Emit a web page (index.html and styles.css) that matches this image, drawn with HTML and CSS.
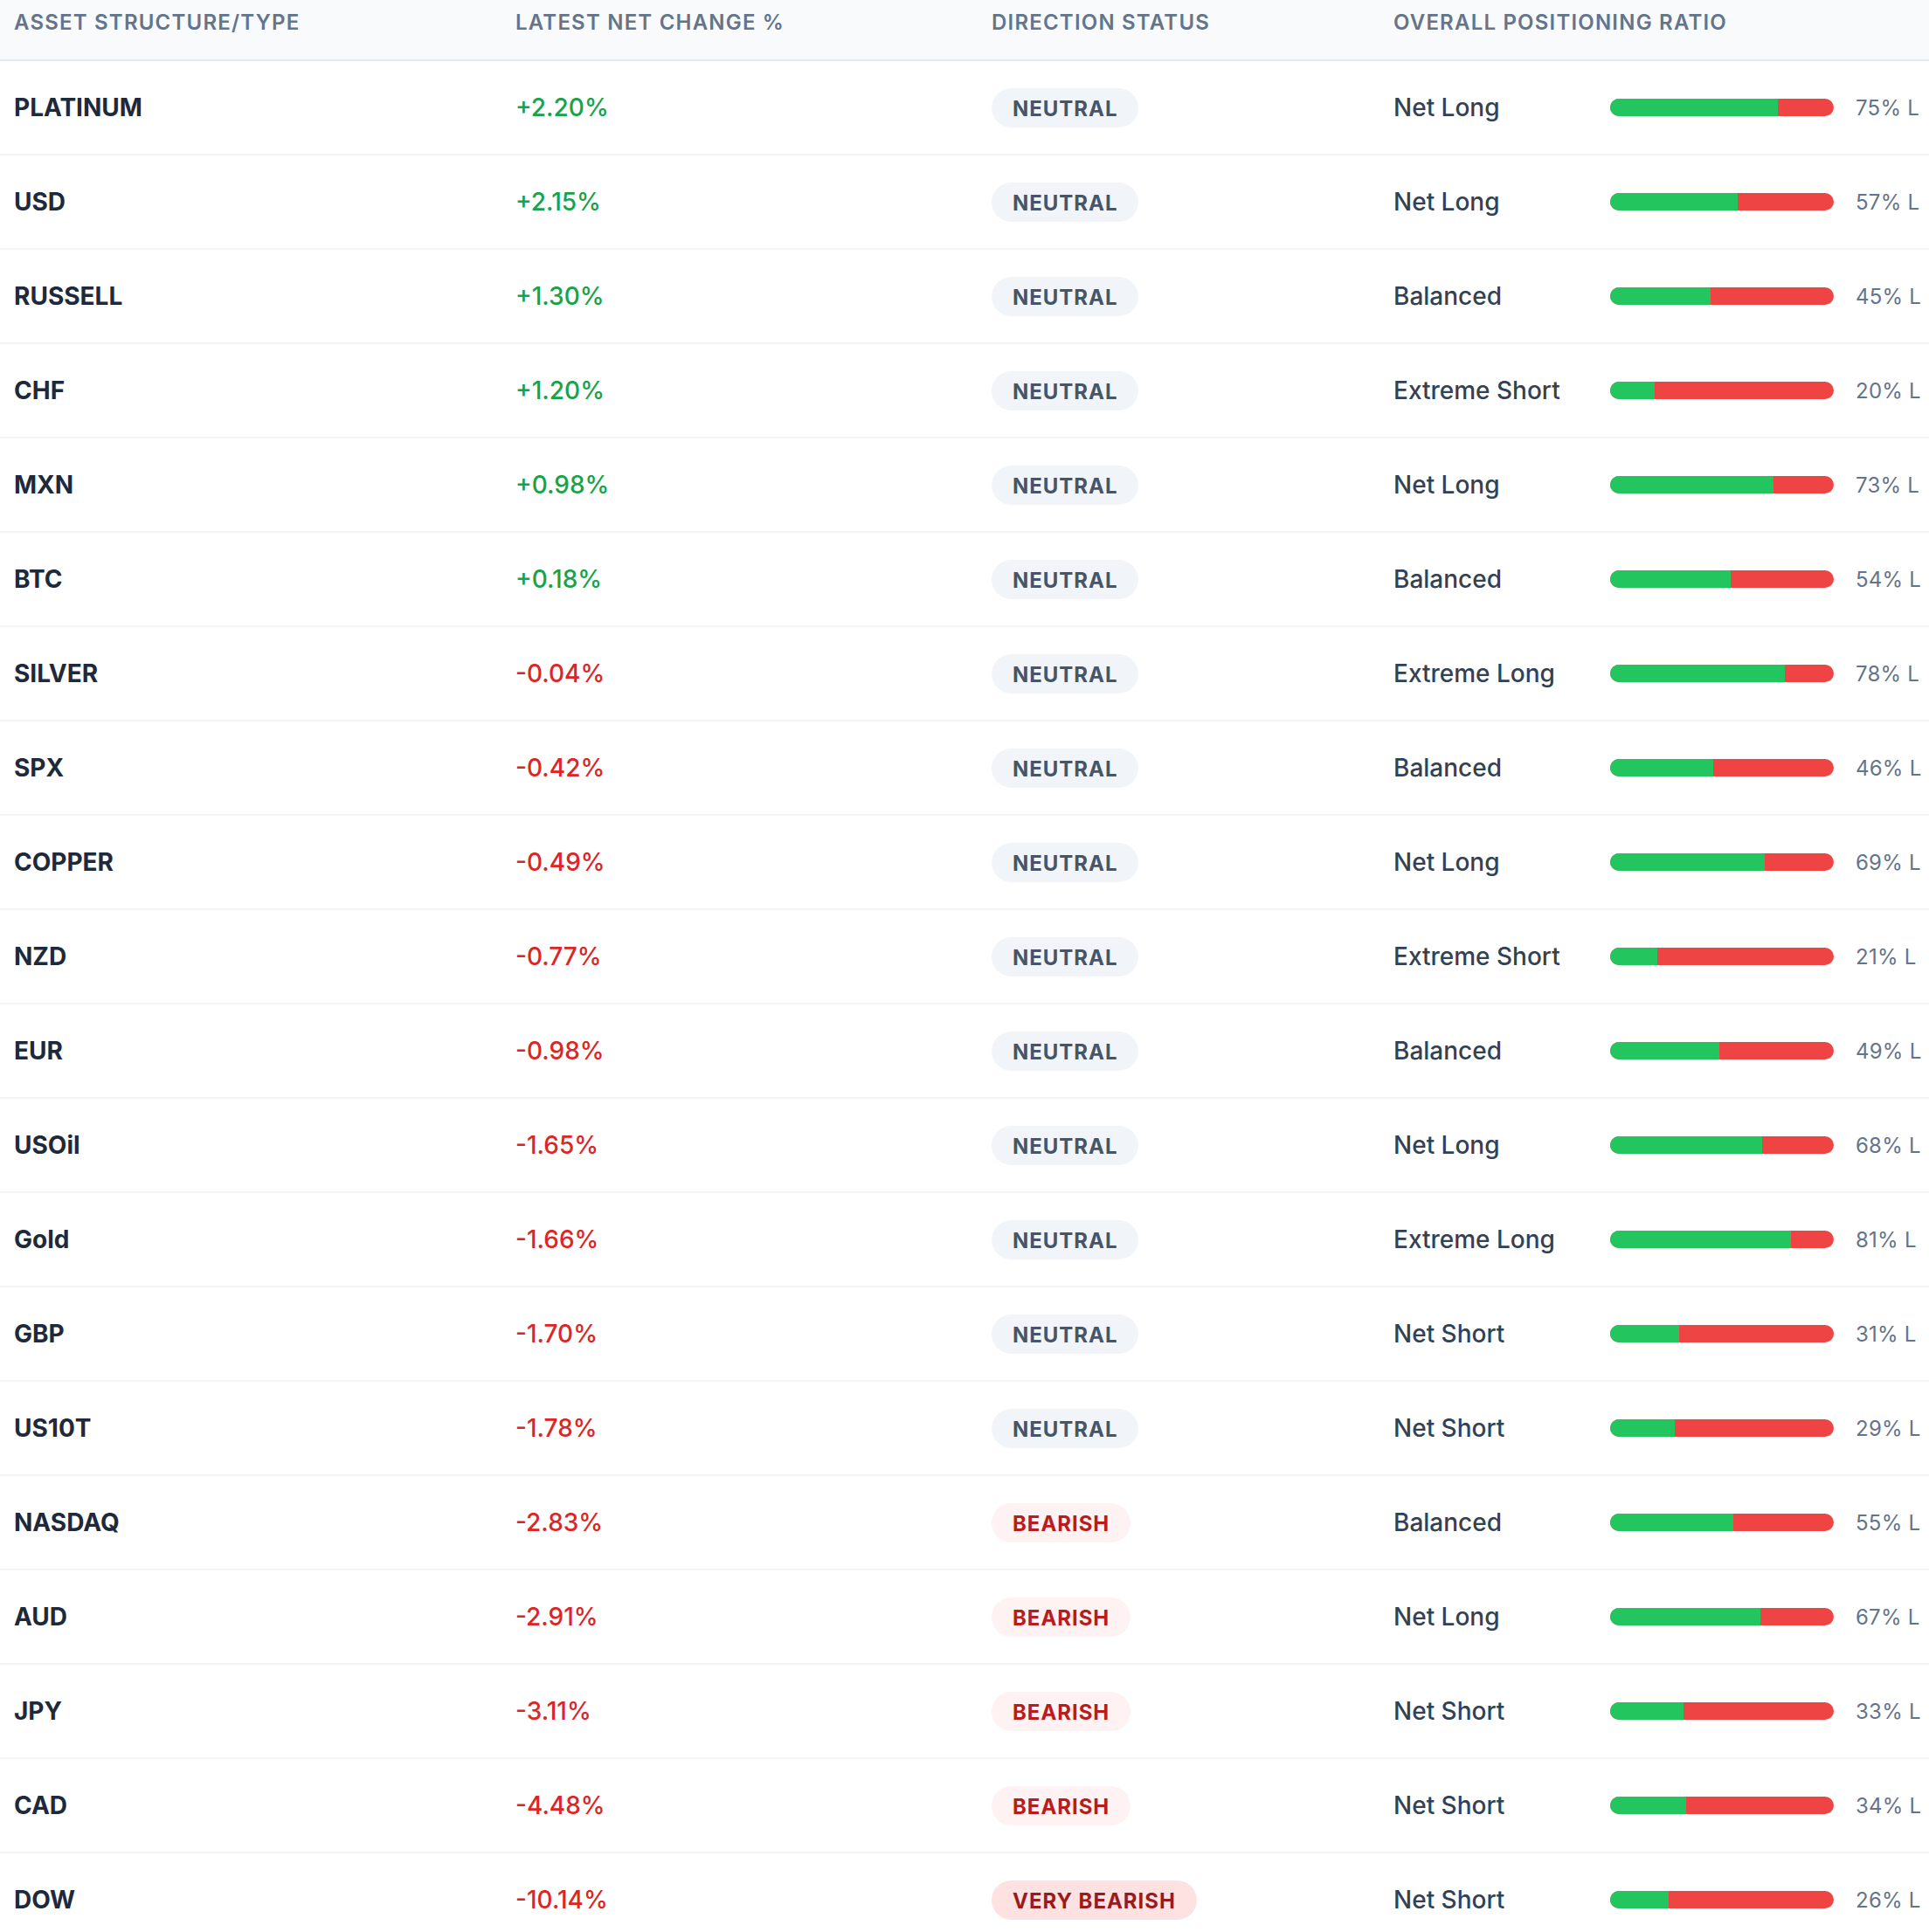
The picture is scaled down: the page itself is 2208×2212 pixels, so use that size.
FILE: index.html
```html
<!DOCTYPE html>
<html lang="en">
<head>
<meta charset="utf-8">
<title>Positioning</title>
<link rel="stylesheet" href="styles.css">
</head>
<body>
<div class="table">
  <div class="row head">
    <div class="cell">Asset Structure/Type</div>
    <div class="cell">Latest Net Change %</div>
    <div class="cell">Direction Status</div>
    <div class="cell">Overall Positioning Ratio</div>
  </div>

  <div class="row"><div class="cell asset">PLATINUM</div><div class="cell chg up">+2.20%</div><div class="cell"><span class="badge neutral">NEUTRAL</span></div><div class="cell pos"><span class="pos-label">Net Long</span><span class="bar"><span class="long" style="width:75%"></span></span><span class="pct">75% L</span></div></div>
  <div class="row"><div class="cell asset">USD</div><div class="cell chg up">+2.15%</div><div class="cell"><span class="badge neutral">NEUTRAL</span></div><div class="cell pos"><span class="pos-label">Net Long</span><span class="bar"><span class="long" style="width:57%"></span></span><span class="pct">57% L</span></div></div>
  <div class="row"><div class="cell asset">RUSSELL</div><div class="cell chg up">+1.30%</div><div class="cell"><span class="badge neutral">NEUTRAL</span></div><div class="cell pos"><span class="pos-label">Balanced</span><span class="bar"><span class="long" style="width:45%"></span></span><span class="pct">45% L</span></div></div>
  <div class="row"><div class="cell asset">CHF</div><div class="cell chg up">+1.20%</div><div class="cell"><span class="badge neutral">NEUTRAL</span></div><div class="cell pos"><span class="pos-label">Extreme Short</span><span class="bar"><span class="long" style="width:20%"></span></span><span class="pct">20% L</span></div></div>
  <div class="row"><div class="cell asset">MXN</div><div class="cell chg up">+0.98%</div><div class="cell"><span class="badge neutral">NEUTRAL</span></div><div class="cell pos"><span class="pos-label">Net Long</span><span class="bar"><span class="long" style="width:73%"></span></span><span class="pct">73% L</span></div></div>
  <div class="row"><div class="cell asset">BTC</div><div class="cell chg up">+0.18%</div><div class="cell"><span class="badge neutral">NEUTRAL</span></div><div class="cell pos"><span class="pos-label">Balanced</span><span class="bar"><span class="long" style="width:54%"></span></span><span class="pct">54% L</span></div></div>
  <div class="row"><div class="cell asset">SILVER</div><div class="cell chg down">-0.04%</div><div class="cell"><span class="badge neutral">NEUTRAL</span></div><div class="cell pos"><span class="pos-label">Extreme Long</span><span class="bar"><span class="long" style="width:78%"></span></span><span class="pct">78% L</span></div></div>
  <div class="row"><div class="cell asset">SPX</div><div class="cell chg down">-0.42%</div><div class="cell"><span class="badge neutral">NEUTRAL</span></div><div class="cell pos"><span class="pos-label">Balanced</span><span class="bar"><span class="long" style="width:46%"></span></span><span class="pct">46% L</span></div></div>
  <div class="row"><div class="cell asset">COPPER</div><div class="cell chg down">-0.49%</div><div class="cell"><span class="badge neutral">NEUTRAL</span></div><div class="cell pos"><span class="pos-label">Net Long</span><span class="bar"><span class="long" style="width:69%"></span></span><span class="pct">69% L</span></div></div>
  <div class="row"><div class="cell asset">NZD</div><div class="cell chg down">-0.77%</div><div class="cell"><span class="badge neutral">NEUTRAL</span></div><div class="cell pos"><span class="pos-label">Extreme Short</span><span class="bar"><span class="long" style="width:21%"></span></span><span class="pct">21% L</span></div></div>
  <div class="row"><div class="cell asset">EUR</div><div class="cell chg down">-0.98%</div><div class="cell"><span class="badge neutral">NEUTRAL</span></div><div class="cell pos"><span class="pos-label">Balanced</span><span class="bar"><span class="long" style="width:49%"></span></span><span class="pct">49% L</span></div></div>
  <div class="row"><div class="cell asset">USOil</div><div class="cell chg down">-1.65%</div><div class="cell"><span class="badge neutral">NEUTRAL</span></div><div class="cell pos"><span class="pos-label">Net Long</span><span class="bar"><span class="long" style="width:68%"></span></span><span class="pct">68% L</span></div></div>
  <div class="row"><div class="cell asset">Gold</div><div class="cell chg down">-1.66%</div><div class="cell"><span class="badge neutral">NEUTRAL</span></div><div class="cell pos"><span class="pos-label">Extreme Long</span><span class="bar"><span class="long" style="width:81%"></span></span><span class="pct">81% L</span></div></div>
  <div class="row"><div class="cell asset">GBP</div><div class="cell chg down">-1.70%</div><div class="cell"><span class="badge neutral">NEUTRAL</span></div><div class="cell pos"><span class="pos-label">Net Short</span><span class="bar"><span class="long" style="width:31%"></span></span><span class="pct">31% L</span></div></div>
  <div class="row"><div class="cell asset">US10T</div><div class="cell chg down">-1.78%</div><div class="cell"><span class="badge neutral">NEUTRAL</span></div><div class="cell pos"><span class="pos-label">Net Short</span><span class="bar"><span class="long" style="width:29%"></span></span><span class="pct">29% L</span></div></div>
  <div class="row"><div class="cell asset">NASDAQ</div><div class="cell chg down">-2.83%</div><div class="cell"><span class="badge bearish">BEARISH</span></div><div class="cell pos"><span class="pos-label">Balanced</span><span class="bar"><span class="long" style="width:55%"></span></span><span class="pct">55% L</span></div></div>
  <div class="row"><div class="cell asset">AUD</div><div class="cell chg down">-2.91%</div><div class="cell"><span class="badge bearish">BEARISH</span></div><div class="cell pos"><span class="pos-label">Net Long</span><span class="bar"><span class="long" style="width:67%"></span></span><span class="pct">67% L</span></div></div>
  <div class="row"><div class="cell asset">JPY</div><div class="cell chg down">-3.11%</div><div class="cell"><span class="badge bearish">BEARISH</span></div><div class="cell pos"><span class="pos-label">Net Short</span><span class="bar"><span class="long" style="width:33%"></span></span><span class="pct">33% L</span></div></div>
  <div class="row"><div class="cell asset">CAD</div><div class="cell chg down">-4.48%</div><div class="cell"><span class="badge bearish">BEARISH</span></div><div class="cell pos"><span class="pos-label">Net Short</span><span class="bar"><span class="long" style="width:34%"></span></span><span class="pct">34% L</span></div></div>
  <div class="row"><div class="cell asset">DOW</div><div class="cell chg down">-10.14%</div><div class="cell"><span class="badge very-bearish">VERY BEARISH</span></div><div class="cell pos"><span class="pos-label">Net Short</span><span class="bar"><span class="long" style="width:26%"></span></span><span class="pct">26% L</span></div></div>
</div>
</body>
</html>
```

FILE: styles.css
```css
html, body {
  margin: 0;
  padding: 0;
  background: #ffffff;
}

body {
  font-family: Inter, "Noto Sans", "Liberation Sans", sans-serif;
  color: #1e293b;
}

.table {
  width: 2208px;
}

.row {
  display: grid;
  grid-template-columns: 573px 545px 460px 1fr;
  align-items: center;
  height: 106px;
  border-bottom: 2px solid #f1f5f9;
}

.cell {
  padding: 0 16px;
  white-space: nowrap;
}

.row > .cell:nth-child(2),
.row > .cell:nth-child(3),
.row > .cell:nth-child(4) {
  padding-left: 17px;
}

.head {
  height: 68px;
  align-items: start;
  background: #f8fafc;
  border-bottom: 2px solid #e2e8f0;
}

.head .cell {
  padding-top: 10px;
  font-size: 24px;
  line-height: 32px;
  font-weight: 600;
  letter-spacing: 0.05em;
  text-transform: uppercase;
  color: #64748b;
}

.asset {
  font-size: 28px;
  font-weight: 700;
  color: #1e293b;
}

.chg {
  font-size: 28px;
  font-weight: 500;
}

.up {
  color: #16a34a;
}

.down {
  color: #dc2626;
}

.badge {
  display: inline-block;
  padding: 9px 24px 7px;
  border-radius: 999px;
  font-size: 24px;
  line-height: 29px;
  font-weight: 700;
  letter-spacing: 0.04em;
}

.neutral {
  background: #f1f5f9;
  color: #475569;
}

.bearish {
  background: #fef2f2;
  color: #b91c1c;
}

.very-bearish {
  background: #fee2e2;
  color: #991b1b;
}

.pos {
  display: flex;
  align-items: center;
}

.pos-label {
  width: 248px;
  font-size: 28px;
  font-weight: 500;
  color: #334155;
}

.bar {
  display: flex;
  width: 256px;
  height: 20px;
  border-radius: 10px;
  overflow: hidden;
  background: #ef4444;
}

.long {
  display: block;
  height: 100%;
  background: #22c55e;
}

.pct {
  margin-left: 25px;
  font-size: 24px;
  color: #64748b;
  letter-spacing: 0.01em;
}
```
